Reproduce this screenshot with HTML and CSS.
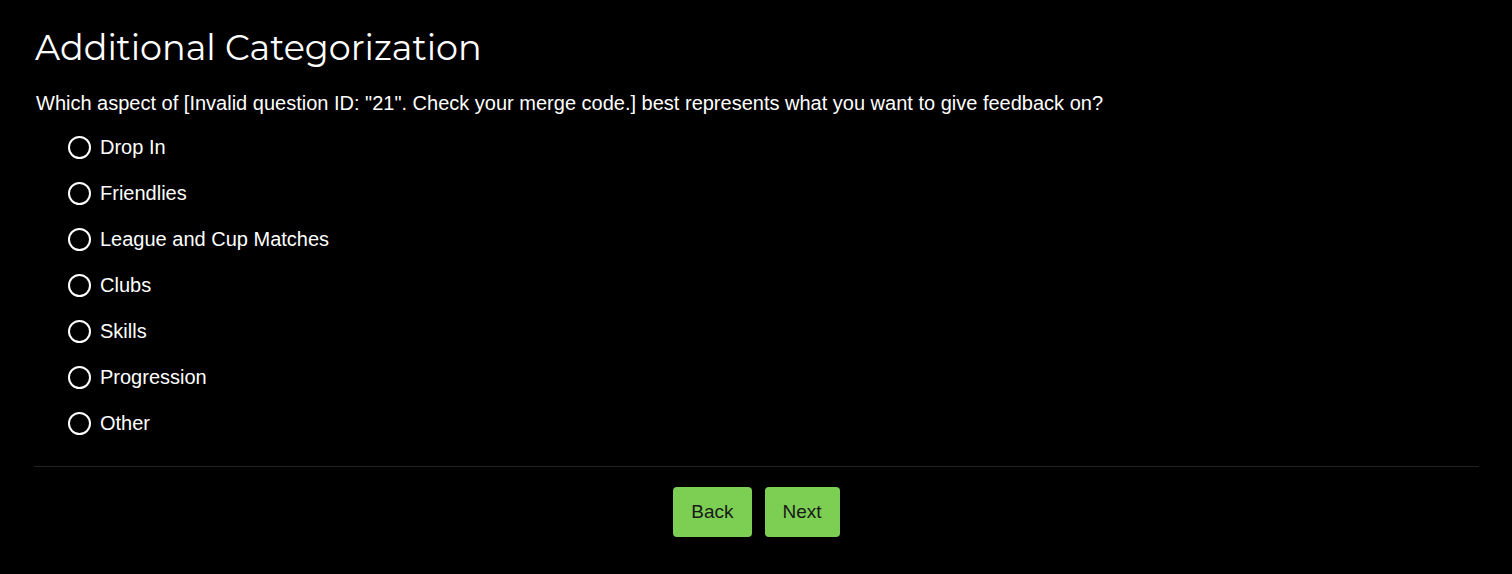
FILE: index.html
```html
<!DOCTYPE html>
<html>
  <head>
    <meta name="viewport" content="width=device-width, initial-scale=1">
    <title>Additional Categorization</title>
    <link rel="stylesheet" href="styles.css">
  </head>
<body>
  <div class="survey">
    <h1 class="pagetitle">Additional Categorization</h1>

    <div class="question">
      <div class="questiontext">Which aspect of [Invalid question ID: "21". Check your merge code.] best represents what you want to give feedback on?</div>
      <div class="choices">
        <label class="choice"><span class="radio"></span><span class="choicetext">Drop In</span></label>
        <label class="choice"><span class="radio"></span><span class="choicetext">Friendlies</span></label>
        <label class="choice"><span class="radio"></span><span class="choicetext">League and Cup Matches</span></label>
        <label class="choice"><span class="radio"></span><span class="choicetext">Clubs</span></label>
        <label class="choice"><span class="radio"></span><span class="choicetext">Skills</span></label>
        <label class="choice"><span class="radio"></span><span class="choicetext">Progression</span></label>
        <label class="choice"><span class="radio"></span><span class="choicetext">Other</span></label>
      </div>
    </div>

    <div class="navbuttons">
      <button class="navbutton">Back</button>
      <button class="navbutton">Next</button>
    </div>
  </div>
</body>
</html>
```

FILE: styles.css
```css
body, html {margin: 0; padding: 0; background-color: black;}

.survey {
  padding: 0 33px 0 34px;
  color: white;
  font-family: 'Liberation Sans', Arial, sans-serif;
}

.pagetitle {
  margin: 0;
  padding-top: 26px;
  font-family: Montserrat, 'Open Sans', sans-serif;
  font-weight: 400;
  font-size: 35px;
  line-height: 44px;
  padding-left: 1px;
}

.questiontext {
  margin-top: 21px;
  padding-left: 2px;
  font-size: 20px;
  line-height: 24px;
}

.choices {
  display: flex;
  flex-direction: column;
  gap: 22px;
  margin-top: 20px;
  padding-left: 34px;
}

.choice {
  display: flex;
  align-items: center;
  gap: 9px;
  font-size: 20px;
  line-height: 24px;
}

.radio {
  width: 19px;
  height: 19px;
  border: 2px solid white;
  border-radius: 50%;
}

.navbuttons {
  display: flex;
  justify-content: center;
  gap: 13px;
  margin-top: 31px;
  padding-top: 20px;
  border-top: 1px solid rgb(34, 34, 34);
}

.navbutton {
  height: 50px;
  padding: 0 18px;
  border: none;
  border-radius: 4px;
  background-color: rgb(124, 207, 82);
  color: rgb(25, 25, 25);
  font-family: 'Liberation Sans', Arial, sans-serif;
  font-size: 19px;
}
```
